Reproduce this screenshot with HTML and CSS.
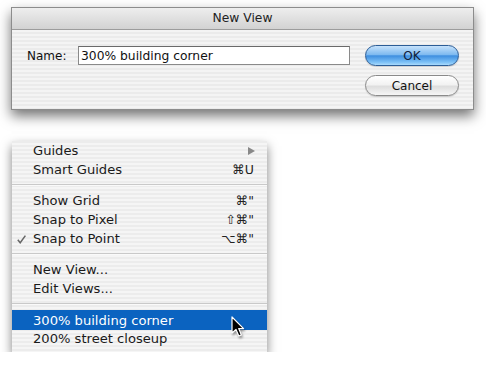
FILE: index.html
```html
<!DOCTYPE html>
<html lang="en">
<head>
  <meta charset="UTF-8">
  <link rel="stylesheet" href="styles.css">
  <title>New View</title>
</head>
<body>
  <div class="dialog">
    <div class="title-bar">New View</div>
    <div class="dialog-body">
      <label class="name-label" for="view-name">Name:</label>
      <input id="view-name" class="name-input" type="text" value="300% building corner">
      <div class="dialog-buttons">
        <button class="aqua-button default">OK</button>
        <button class="aqua-button">Cancel</button>
      </div>
    </div>
  </div>

  <div class="menu">
    <div class="menu-item first">
      <span class="item-label">Guides</span>
      <span class="submenu-arrow"></span>
    </div>
    <div class="menu-item">
      <span class="item-label">Smart Guides</span>
      <span class="shortcut">⌘U</span>
    </div>
    <div class="separator"></div>
    <div class="menu-item">
      <span class="item-label">Show Grid</span>
      <span class="shortcut">⌘"</span>
    </div>
    <div class="menu-item">
      <span class="item-label">Snap to Pixel</span>
      <span class="shortcut">⇧⌘"</span>
    </div>
    <div class="menu-item">
      <svg class="check" width="9" height="9" viewBox="0 0 9 9">
        <path d="M0.8 4.8 L3.2 7.8 L8.4 0.6" fill="none" stroke="#666" stroke-width="1.5"/>
      </svg>
      <span class="item-label">Snap to Point</span>
      <span class="shortcut">⌥⌘"</span>
    </div>
    <div class="separator"></div>
    <div class="menu-item">
      <span class="item-label">New View...</span>
    </div>
    <div class="menu-item">
      <span class="item-label">Edit Views...</span>
    </div>
    <div class="separator"></div>
    <div class="menu-item selected">
      <span class="item-label">300% building corner</span>
    </div>
    <div class="menu-item">
      <span class="item-label">200% street closeup</span>
    </div>

    <svg class="cursor" width="16" height="24" viewBox="0 0 16 24">
      <path d="M1 1 L1 17 L5 13.5 L7.8 20 L10.4 18.9 L7.7 12.6 L12.6 12.6 Z" fill="#000" stroke="#fff" stroke-width="1.2" stroke-linejoin="round"/>
    </svg>
  </div>
</body>
</html>
```

FILE: styles.css
```css
body {
  margin: 0;
  background-color: #ffffff;
  font-family: 'DejaVu Sans', Verdana, sans-serif;
  color: #111;
}

.dialog {
  width: 461px;
  height: 101px;
  margin: 7px 0 0 11px;
  border: 1px solid #8c8c8c;
  background: repeating-linear-gradient(to bottom, #ebebeb 0 2px, #f4f4f4 2px 4px);
  box-shadow: 0 6px 12px rgba(0, 0, 0, 0.55);
}

.title-bar {
  height: 21px;
  line-height: 21px;
  text-align: center;
  font-size: 12.3px;
  color: #222;
  background: linear-gradient(to bottom, #eeeeee, #d2d2d2);
  border-bottom: 1px solid #9c9c9c;
}

.dialog-body {
  display: flex;
  align-items: flex-start;
  padding: 15px 0 0 15px;
}

.name-label {
  font-size: 12px;
  line-height: 18px;
  margin-top: 2px;
  width: 51px;
}

.name-input {
  box-sizing: border-box;
  width: 272px;
  height: 19px;
  margin-top: 1px;
  padding: 0 2px;
  border: 1px solid #8a8a8a;
  border-top-color: #6a6a6a;
  background: #ffffff;
  font-family: 'DejaVu Sans', Verdana, sans-serif;
  font-size: 12.3px;
  color: #111;
  outline: none;
}

.dialog-buttons {
  display: flex;
  flex-direction: column;
  gap: 9px;
  margin-left: 15px;
}

.aqua-button {
  width: 94px;
  height: 21px;
  padding: 0;
  border: 1px solid #8a8a8a;
  border-radius: 11px;
  background: linear-gradient(to bottom, #ffffff 0%, #f2f2f2 45%, #dedede 55%, #f6f6f6 100%);
  font-family: 'DejaVu Sans', Verdana, sans-serif;
  font-size: 12px;
  color: #111;
  box-shadow: 0 1px 1px rgba(0, 0, 0, 0.15);
}

.aqua-button.default {
  border-color: #2c5d96;
  background: linear-gradient(to bottom, #c6e2fb 0%, #7fbaf0 45%, #3f8fe0 52%, #7cc0f6 85%, #a9dafc 100%);
  color: #10203a;
}

.menu {
  position: relative;
  width: 255px;
  height: 206px;
  margin: 32px 0 0 12px;
  padding-bottom: 5px;
  background: repeating-linear-gradient(to bottom, #ececec 0 2px, #f5f5f5 2px 4px);
  box-shadow: 0 5px 10px rgba(0, 0, 0, 0.5);
  font-size: 13.1px;
  color: #1a1a1a;
}

.menu-item {
  position: relative;
  display: flex;
  align-items: center;
  justify-content: space-between;
  height: 19px;
  padding: 0 13px 0 21px;
}

.menu-item.first {
  margin-top: -1px;
}

.menu-item.selected {
  height: 20px;
  margin-bottom: -1px;
  background-color: #0b63c0;
  color: #ffffff;
}

.check {
  position: absolute;
  left: 5px;
  top: 6px;
}

.shortcut {
  font-size: 12.5px;
  color: #222;
}

.submenu-arrow {
  width: 0;
  height: 0;
  margin-right: -1px;
  border-top: 4px solid transparent;
  border-bottom: 4px solid transparent;
  border-left: 7px solid #888;
}

.separator {
  height: 12px;
  background: linear-gradient(to bottom, transparent 5px, #c9c9c9 5px, #c9c9c9 6px, #fafafa 6px, #fafafa 7px, transparent 7px);
}

.cursor {
  position: absolute;
  left: 219px;
  top: 175px;
  filter: drop-shadow(1px 2px 1px rgba(0, 0, 0, 0.4));
}
```
